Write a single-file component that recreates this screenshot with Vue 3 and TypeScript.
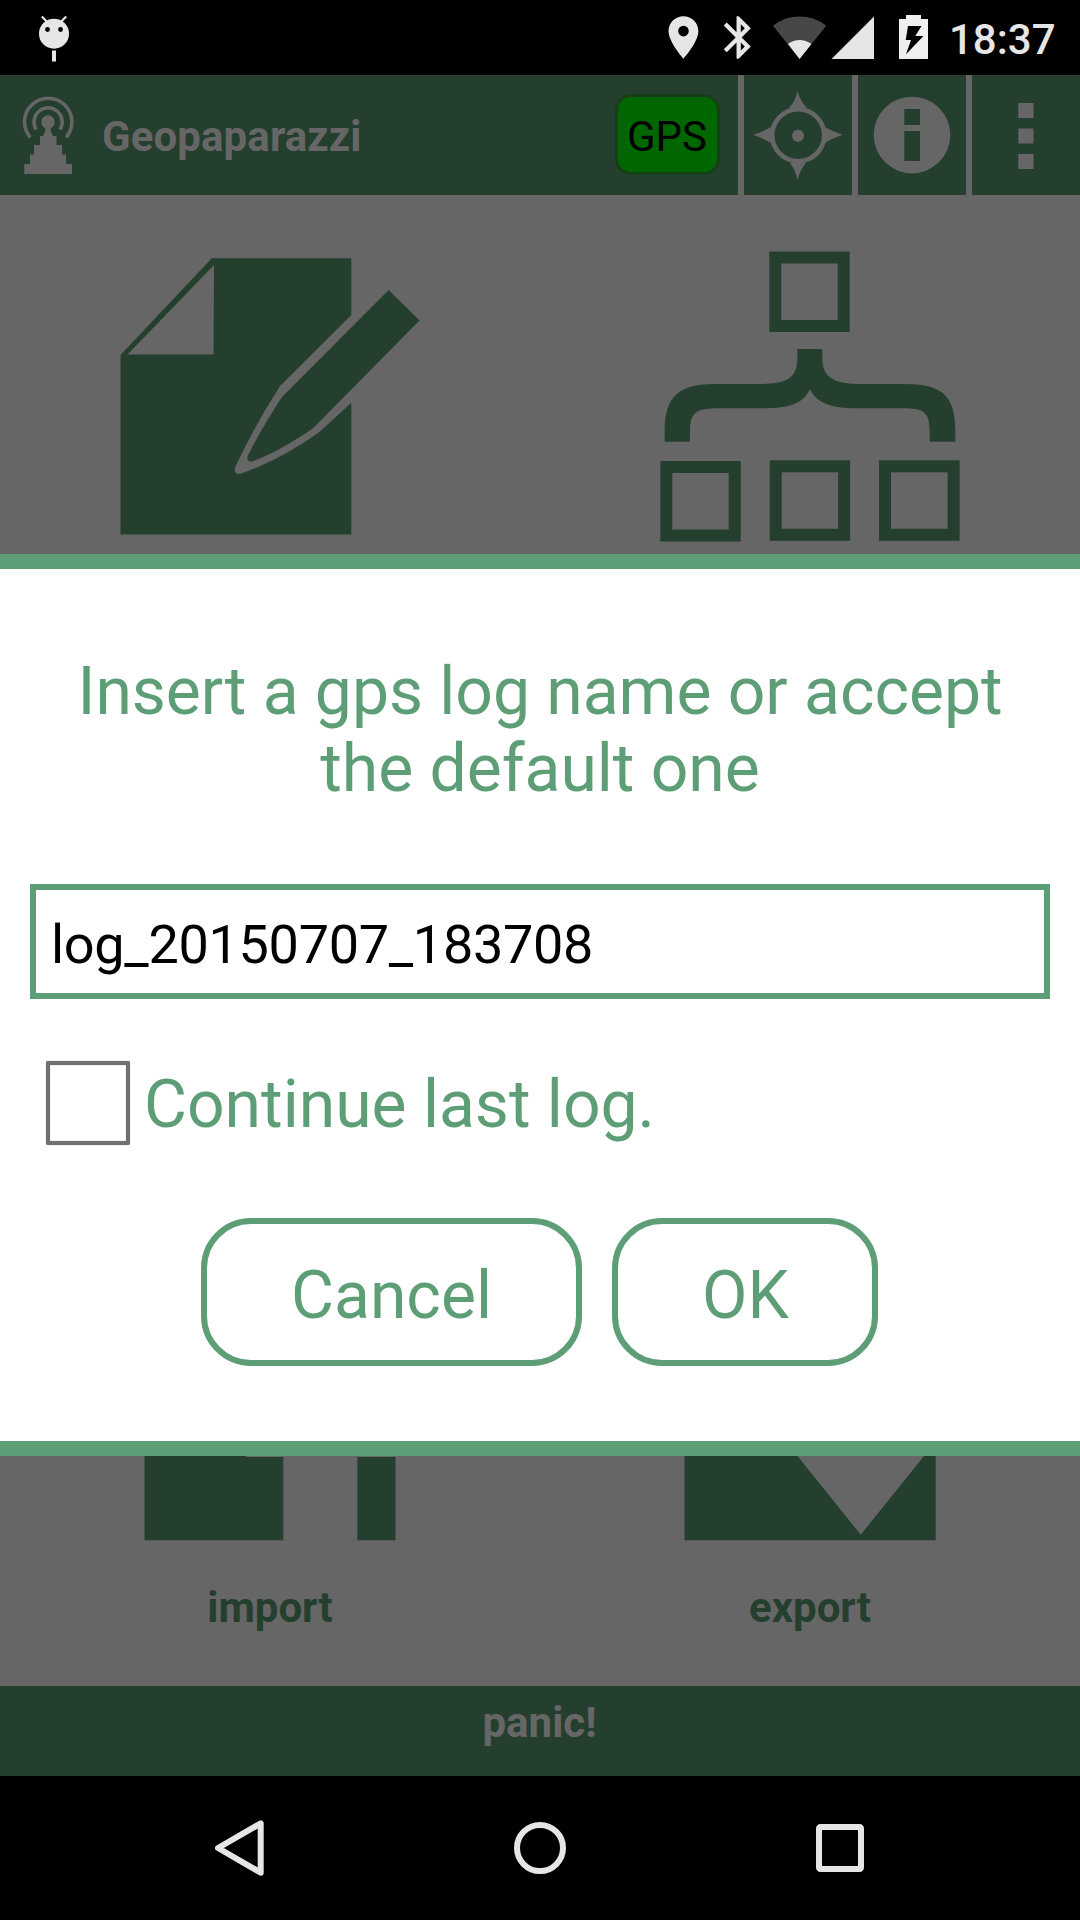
<script setup lang="ts">
import { ref } from 'vue'

const logName = ref<string>('log_20150707_183708')
const continueLast = ref<boolean>(false)
</script>

<template>
  <div class="screen">
    <header class="status">
      <svg class="bug" width="32" height="75" viewBox="38 0 32 75">
        <circle cx="54" cy="33.7" r="15" fill="#e6e6e6" />
        <path d="M41.8 16.5l5 5M66.2 16.5l-5 5" stroke="#e6e6e6" stroke-width="2.2" />
        <circle cx="47.5" cy="29.5" r="2.4" />
        <circle cx="60.5" cy="29.5" r="2.4" />
        <rect x="52" y="50.5" width="4" height="11" fill="#e6e6e6" />
      </svg>
      <svg class="tray" width="270" height="75" viewBox="664 0 270 75" fill="#e6e6e6">
        <path transform="translate(657.9 11.9) scale(2.13)" d="M12 2C8.13 2 5 5.13 5 9c0 5.25 7 13 7 13s7-7.75 7-13c0-3.87-3.13-7-7-7zm0 9.5a2.5 2.5 0 1 1 0-5 2.5 2.5 0 0 1 0 5z" />
        <path transform="translate(713.1 11.9) scale(2.13)" d="M17.71 7.71L12 2h-1v7.59L6.41 5 5 6.41 10.59 12 5 17.59 6.41 19 11 14.41V22h1l5.71-5.71-4.3-4.29 4.3-4.29zM13 5.83l1.88 1.88L13 9.59V5.83zm1.88 10.46L13 18.17v-3.76l1.88 1.88z" />
        <path d="M773 25.7Q784.500 16.400 799.600 16.400T826.200 25.700L799.600 59z" fill="#474747" />
        <path d="M788 44Q793.500 40 799.600 40T811.400 44L799.600 59z" />
        <path d="M831.500 59H874V16.500z" />
        <path d="M899 19H906V15H921V19H928V59H899z" fill="#efefef" />
        <path d="M908 26H921.500L915.300 36H923.500L906 54.300L911 40H905.700z" fill="#000" />
      </svg>
      <span class="clock">18:37</span>
    </header>

    <div class="appbar">
      <div class="brand">
        <svg width="100" height="120" viewBox="0 75 100 120" fill="#666">
          <circle cx="48" cy="122" r="6.700" />
          <path d="M45.300 124H50.700V131L53 136H56.500V145H62V154.500H66V164H72V174H24.300V164H30V154.500H34V145H40V136H43L45.300 131z" />
          <path d="M36.200 129.500A14.100 14.100 0 1 1 60 129.500" fill="none" stroke="#666" stroke-width="3.500" />
          <path d="M30.200 137.300A23.700 23.700 0 1 1 66.200 137.300" fill="none" stroke="#666" stroke-width="3.600" />
        </svg>
        <span class="title">Geopaparazzi</span>
        <span class="gps">GPS</span>
      </div>
      <div class="action">
        <svg width="108" height="120" viewBox="744 75 108 120" fill="#666">
          <path d="M797.500 91Q800 101 807 108L797.500 112L789 108Q795.500 101 797.500 91zM797.500 180Q800 170 806 163L797.500 160L790 163Q795.500 170 797.500 180zM753 134.700Q763 132 771.500 126.500V143.500Q763 138 753 134.700zM842.700 134.700Q833 132 824 126.500V143.500Q833 138 842.700 134.700z" />
          <circle cx="798.200" cy="135.300" r="26" fill="#253f2f" stroke="#666" stroke-width="4.600" />
          <circle cx="798" cy="135.700" r="6" />
        </svg>
      </div>
      <div class="action">
        <svg width="108" height="120" viewBox="858 75 108 120">
          <circle cx="912" cy="135" r="38.300" fill="#666" />
          <path d="M904.300 109H920V125H904.300zM904.300 131H920V161H904.300z" fill="#253f2f" />
        </svg>
      </div>
      <div class="action">
        <svg width="108" height="120" viewBox="972 75 108 120" fill="#666">
          <path d="M1018.300 103H1033.500V118H1018.300zM1018.300 128.500H1033.500V143.500H1018.300zM1018.300 154H1033.500V169H1018.300z" />
        </svg>
      </div>
    </div>

    <main class="tiles">
      <div class="row">
        <svg width="540" height="359" viewBox="0 195 540 359" fill="#253f2f">
          <path fill-rule="evenodd" d="M211.800 258.300H351.300V315L280 386Q255 425 235 467.500Q233.500 474.500 240 474Q280 460 318.500 432.700L351.300 402.700V534.500H120.500V355zM214 265L127.500 354.500H213.500z" />
          <path d="M388.700 290L419.500 320.500L313 428.300Q277 453 251 461.800Q247 461.500 247.300 457Q258 434 282 397z" />
        </svg>
        <svg width="540" height="359" viewBox="540 195 540 359" fill="#253f2f">
          <g fill="none" stroke="#253f2f" stroke-width="12">
            <rect x="775.300" y="257.500" width="68.400" height="68.500" />
            <rect x="666.300" y="467" width="68.400" height="68.500" />
            <rect x="775.700" y="466.300" width="68.400" height="68.500" />
            <rect x="885" y="466.300" width="68.600" height="68.500" />
          </g>
          <path transform="translate(640 240) scale(.33333)" d="M472 327H547V355C547 415 585 432 660 432H795C905 432 946 465 946 575V605H869V575C869 515 850 505 790 505H650C575 505 530 490 510 448C490 490 450 505 370 505H240C170 505 150 515 150 575V605H74V575C74 465 120 432 225 432H360C440 432 472 415 472 355z" />
        </svg>
      </div>
      <div class="row">
        <div class="tile">
          <svg width="540" height="85" viewBox="0 1456 540 85" fill="#253f2f">
            <path d="M144.500 1456H246V1457H283.300V1540.300H144.500zM357.300 1457H395.500V1540.300H357.300z" />
            <path d="M283.300 1540H357.300V1541H283.300z" fill="#616261" />
          </svg>
          <span>import</span>
        </div>
        <div class="tile">
          <svg width="540" height="85" viewBox="540 1456 540 85" fill="#253f2f">
            <path d="M684.500 1456H797.500L860.700 1534.700L924 1456H935.700V1540.300H684.500z" />
          </svg>
          <span>export</span>
        </div>
      </div>
    </main>

    <div class="panic">panic!</div>

    <nav class="nav">
      <svg width="300" height="144" viewBox="90 1776 300 144"><path d="M218 1848L260.700 1823.300V1872.700z" /></svg>
      <svg width="300" height="144" viewBox="390 1776 300 144"><circle cx="540" cy="1848" r="23" /></svg>
      <svg width="300" height="144" viewBox="690 1776 300 144"><rect x="819" y="1827" width="42" height="42" rx="1.500" /></svg>
    </nav>

    <section class="dialog">
      <h1>Insert a gps log name or accept<br />the default one</h1>
      <input v-model="logName" class="field" type="text" spellcheck="false" />
      <label class="check">
        <input v-model="continueLast" type="checkbox" />
        <span>Continue last log.</span>
      </label>
      <div class="buttons">
        <button class="cancel">Cancel</button>
        <button class="ok">OK</button>
      </div>
    </section>
  </div>
</template>

<style>
body {
  margin: 0;
  background: #000;
}
</style>

<style scoped>
.screen {
  position: relative;
  display: flex;
  flex-direction: column;
  width: 1080px;
  height: 1920px;
  overflow: hidden;
  background: #666;
  font-family: Roboto, sans-serif;
}
svg {
  display: block;
  flex: none;
}
.status {
  display: flex;
  height: 75px;
  background: #000;
}
.bug {
  margin-left: 38px;
}
.tray {
  margin-left: auto;
}
.clock {
  width: 131px;
  margin: 15px 0 0 15px;
  color: #e6e6e6;
  font-size: 42px;
  font-weight: 500;
  line-height: 49px;
}
.appbar {
  display: flex;
  gap: 6px;
  height: 120px;
}
.brand {
  display: flex;
  width: 738px;
  background: #253f2f;
}
.title {
  margin-top: 37px;
  margin-left: 2px;
  color: #666;
  font-size: 42px;
  font-weight: 700;
  line-height: 49px;
  letter-spacing: 0.1px;
}
.gps {
  box-sizing: border-box;
  width: 105px;
  height: 81px;
  margin: 19px 18px 0 auto;
  padding: 15px 1px 0 0;
  border: 3px solid #163f17;
  border-radius: 16px;
  background: #060;
  color: #000;
  font-size: 42px;
  line-height: 49px;
  text-align: center;
}
.action {
  width: 108px;
  background: #253f2f;
}
.tiles {
  display: flex;
  flex-direction: column;
  justify-content: space-between;
  height: 1491px;
}
.row {
  display: flex;
}
.tile {
  display: flex;
  flex-direction: column;
  align-items: center;
  width: 540px;
  height: 230px;
}
.tile span {
  margin-top: 42px;
  color: #253f2f;
  font-size: 42px;
  font-weight: 700;
  line-height: 49px;
}
.panic {
  box-sizing: border-box;
  height: 90px;
  padding: 12px 1px 0 0;
  background: #253f2f;
  color: #666;
  font-size: 42px;
  font-weight: 700;
  line-height: 49px;
  text-align: center;
}
.nav {
  display: flex;
  justify-content: center;
  height: 144px;
  background: #000;
}
.nav svg {
  fill: none;
  stroke: #e6e6e6;
  stroke-width: 6;
  stroke-linejoin: round;
}
.dialog {
  position: absolute;
  top: 554px;
  left: 0;
  box-sizing: border-box;
  width: 1080px;
  height: 902px;
  padding: 84px 30px 0;
  border: solid #5d9e76;
  border-width: 15px 0;
  background: #fff;
  color: #5d9e76;
}
h1 {
  margin: 0;
  font-size: 66px;
  font-weight: 400;
  line-height: 77px;
  letter-spacing: -0.03px;
  text-align: center;
  white-space: nowrap;
}
.field {
  display: block;
  box-sizing: border-box;
  width: 1020px;
  height: 115px;
  margin: 77px 0 0;
  padding: 6px 15px 0;
  border: 6px solid #5d9e76;
  border-radius: 0;
  outline: none;
  background: #fff;
  color: #000;
  font: 54px Roboto, sans-serif;
  letter-spacing: -0.3px;
}
.check {
  display: flex;
  gap: 14px;
  margin: 62px 0 0 16px;
  font-size: 66px;
  line-height: 77px;
}
.check input {
  appearance: none;
  box-sizing: border-box;
  width: 84px;
  height: 84px;
  margin: 0;
  border: 4px solid #707070;
  border-radius: 2px;
  background: #fff;
  box-shadow: 0 0 1px #777, inset 0 0 1px #777;
}
.check span {
  margin-top: 5px;
}
.buttons {
  display: flex;
  gap: 30px;
  margin: 73px 0 0 171px;
}
button {
  box-sizing: border-box;
  height: 148px;
  padding: 7px 0 0;
  border: 6px solid #5d9e76;
  border-radius: 50px;
  background: #fff;
  color: #5d9e76;
  font: 66px/77px Roboto, sans-serif;
}
.cancel {
  width: 381px;
}
.ok {
  width: 266px;
  padding-left: 1px;
}
</style>
